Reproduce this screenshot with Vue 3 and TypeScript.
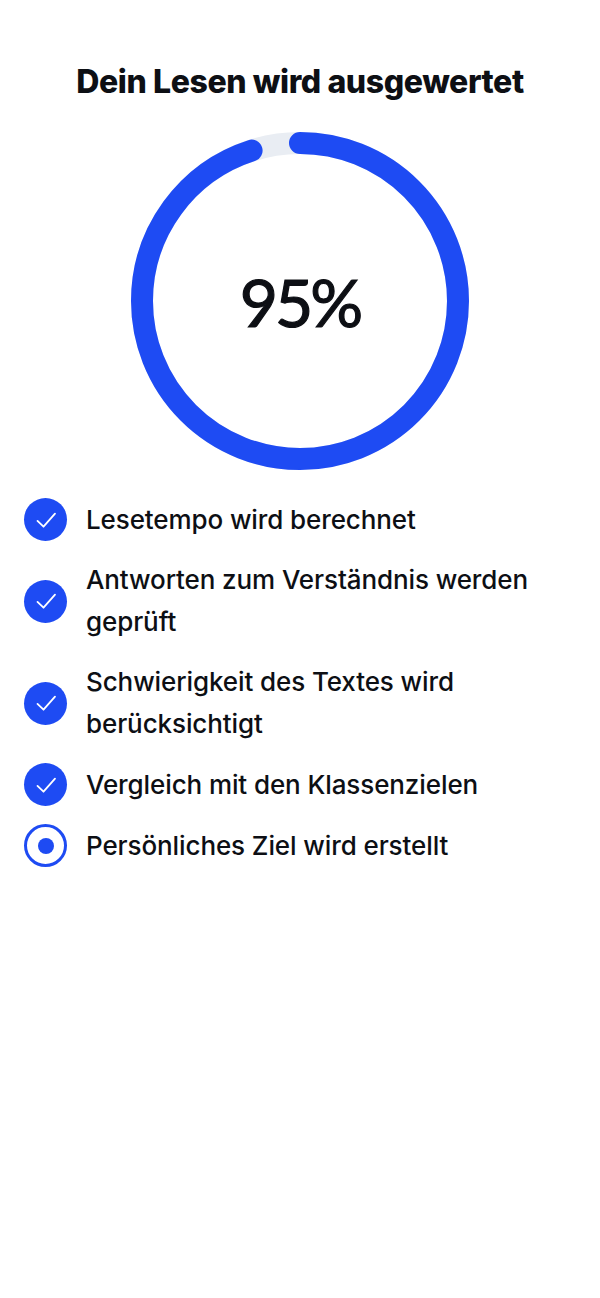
<script setup lang="ts">
interface Step {
  id: number;
  label: string;
  done: boolean;
}

const progress = 95;
const radius = 158;
const circumference = 2 * Math.PI * radius;
const dashArray = `${(circumference * progress) / 100} ${circumference}`;

const steps: Step[] = [
  { id: 1, label: 'Lesetempo wird berechnet', done: true },
  { id: 2, label: 'Antworten zum Verständnis werden geprüft', done: true },
  { id: 3, label: 'Schwierigkeit des Textes wird berücksichtigt', done: true },
  { id: 4, label: 'Vergleich mit den Klassenzielen', done: true },
  { id: 5, label: 'Persönliches Ziel wird erstellt', done: false },
];
</script>

<template>
  <main class="screen">
    <h1 class="title">Dein Lesen wird ausgewertet</h1>

    <div class="ring">
      <svg class="ring-svg" width="338" height="338" viewBox="0 0 338 338">
        <circle cx="169" cy="169" :r="radius" fill="none" stroke="#e9edf3" stroke-width="22" />
        <circle
          cx="169"
          cy="169"
          :r="radius"
          fill="none"
          stroke="#1e4bf3"
          stroke-width="22"
          stroke-linecap="round"
          :stroke-dasharray="dashArray"
          transform="rotate(-90 169 169)"
        />
      </svg>
      <span class="percent">{{ progress }}%</span>
    </div>

    <ul class="steps">
      <li v-for="step in steps" :key="step.id" class="step">
        <span class="icon" :class="{ active: !step.done }">
          <svg v-if="step.done" width="22" height="22" viewBox="0 0 22 22" fill="none">
            <path d="M2.5 11.9 L8.5 17.7 L20 4.6" stroke="#fff" stroke-width="1.8" stroke-linecap="round" stroke-linejoin="round" />
          </svg>
          <span v-else class="dot"></span>
        </span>
        <span class="label">{{ step.label }}</span>
      </li>
    </ul>
  </main>
</template>

<style scoped>
.screen {
  width: 600px;
  min-height: 1298px;
  background: #fff;
  color: #0d0f14;
  font-family: 'Inter', 'Liberation Sans', sans-serif;
  padding: 60px 24px 0;
  box-sizing: border-box;
}

.title {
  margin: 0;
  font-size: 32px;
  line-height: 44px;
  font-weight: 800;
  letter-spacing: -0.4px;
  text-align: center;
}

.ring {
  position: relative;
  width: 338px;
  height: 338px;
  margin: 28px auto 0;
}

.ring-svg {
  display: block;
}

.percent {
  position: absolute;
  inset: 0;
  display: flex;
  align-items: center;
  justify-content: center;
  font-family: 'Lato', sans-serif;
  font-size: 66px;
  font-weight: 400;
  letter-spacing: -3px;
  -webkit-text-stroke: 1.2px #0d0f14;
}

.steps {
  list-style: none;
  margin: 28px 0 0;
  padding: 0;
  display: flex;
  flex-direction: column;
  gap: 18px;
}

.step {
  display: flex;
  align-items: center;
  gap: 19px;
  min-height: 43px;
}

.icon {
  flex: none;
  width: 43px;
  height: 43px;
  border-radius: 50%;
  background: #1e4bf3;
  display: flex;
  align-items: center;
  justify-content: center;
  box-sizing: border-box;
}

.icon.active {
  background: #fff;
  border: 3px solid #1e4bf3;
}

.dot {
  width: 16px;
  height: 16px;
  border-radius: 50%;
  background: #1e4bf3;
}

.label {
  font-size: 26px;
  line-height: 42px;
  font-weight: 500;
  letter-spacing: -0.1px;
}
</style>
